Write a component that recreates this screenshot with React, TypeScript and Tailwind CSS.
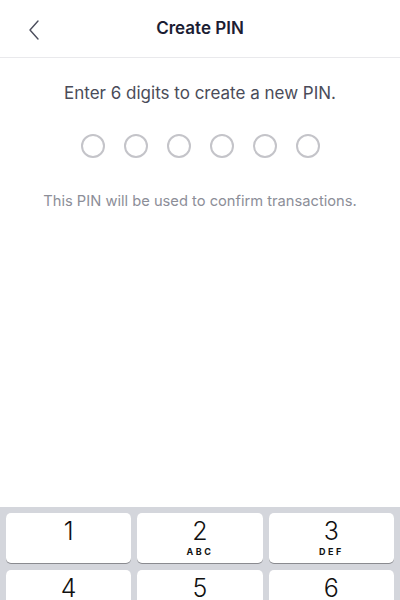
import React from 'react';

const keys: { digit: string; letters: string }[] = [
  { digit: '1', letters: '' },
  { digit: '2', letters: 'ABC' },
  { digit: '3', letters: 'DEF' },
  { digit: '4', letters: 'GHI' },
  { digit: '5', letters: 'JKL' },
  { digit: '6', letters: 'MNO' },
];

export default function App() {
  return (
    <div
      className="h-[600px] w-[400px] overflow-hidden bg-white flex flex-col"
      style={{ fontFamily: 'Inter, "Noto Sans", sans-serif' }}
    >
      {/* header */}
      <div className="relative h-[58px] shrink-0 flex items-center justify-center border-b border-[#e9e9ec]">
        <button className="absolute left-[24px] top-[14px] p-1">
          <svg width="14" height="24" viewBox="0 0 14 24" fill="none">
            <path d="M10 3L2 12L10 21" stroke="#4b4d5c" strokeWidth="1.4" strokeLinecap="round" strokeLinejoin="round" />
          </svg>
        </button>
        <h1 className="text-[17px] font-semibold text-[#1b1d33]">Create PIN</h1>
      </div>

      {/* body */}
      <div className="h-[449px] shrink-0 flex flex-col items-center pt-[23px]">
        <p className="text-[17px] leading-6 text-[#4a4c59]">Enter 6 digits to create a new PIN.</p>
        <div className="mt-[29px] flex gap-[19px]">
          {Array.from({ length: 6 }).map((_, i) => (
            <div key={i} className="h-[24px] w-[24px] rounded-full border-2 border-[#c4c4c9]" />
          ))}
        </div>
        <p className="mt-[33px] text-[14.7px] leading-5 text-[#8c8e98]">This PIN will be used to confirm transactions.</p>
      </div>

      {/* keypad */}
      <div className="shrink-0 bg-[#d4d6dc] px-[6px] pt-[6px] pb-[6px]">
        <div className="grid grid-cols-3 gap-x-[6px] gap-y-[7px]">
          {keys.map((k) => (
            <div
              key={k.digit}
              className="h-[50px] rounded-[5px] bg-white shadow-[0_1px_0_#8a8b90] flex flex-col items-center justify-start pt-[3px]"
            >
              <span className="text-[25px] leading-[30px] text-[#111] font-light">{k.digit}</span>
              <span className="text-[9px] leading-[11px] font-bold tracking-[2.5px] text-[#111]">{k.letters}</span>
            </div>
          ))}
        </div>
      </div>
    </div>
  );
}
